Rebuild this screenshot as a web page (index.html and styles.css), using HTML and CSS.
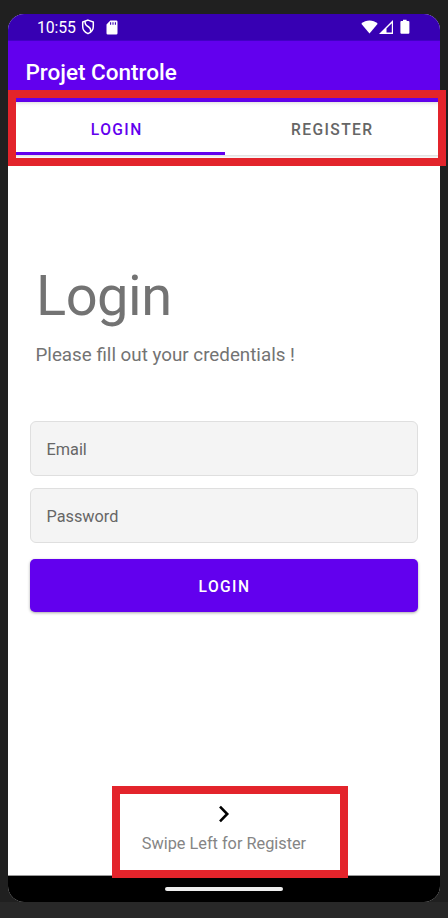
FILE: index.html
```
<!DOCTYPE html>
<html lang="en">
<head>
<meta charset="utf-8">
<title>Projet Controle</title>
<link rel="stylesheet" href="styles.css">
</head>
<body>
<div class="phone">
  <div class="status">
    <span class="clock">10:55</span>
    <svg class="shield" width="14" height="16" viewBox="0 0 14 16" fill="none" stroke="#fff" stroke-width="1.5"><path d="M7 1.1 12.3 3v4.6c0 3.2-2.2 5.8-5.3 7-3.1-1.2-5.3-3.8-5.3-7V3z"/><path d="M4.2 2.3c-.5 2.5.4 3.8 2.8 5.2 2.4 1.4 3.2 2.6 2.5 5.2"/></svg>
    <svg class="card" width="12" height="15" viewBox="0 0 12 15"><path fill="#fff" d="M4.3.5H10.2a1.3 1.3 0 0 1 1.3 1.3V13.2a1.3 1.3 0 0 1-1.3 1.3H1.8A1.3 1.3 0 0 1 .5 13.2V4.5z"/><path stroke="#3700b3" stroke-width="1.1" d="M4.6 2.2v2.6M7 2.2v2.6M9.4 2.2v2.6"/></svg>
    <svg class="signals" width="50" height="16" viewBox="0 0 50 16"><path fill="#fff" d="M.3 4.7C5 .3 12 .3 16.7 4.7L8.500 14.500z"/><path fill="#fff" d="M18 15 32 1v14z"/><path fill="#3700b3" d="M25.500 9.500 30.800 4.200v9.400h-5.300z"/><path fill="#fff" d="M42 .8h3.600v1.300h1.800a1 1 0 0 1 1 1v10.700a1 1 0 0 1-1 1h-7a1 1 0 0 1-1-1V3.100a1 1 0 0 1 1-1H42z"/></svg>
  </div>
  <header class="appbar"><h1>Projet Controle</h1></header>
  <nav class="tabs">
    <div class="tab active"><span>LOGIN</span></div>
    <div class="tab"><span>REGISTER</span></div>
  </nav>
  <main class="page">
    <h2><span>Login</span></h2>
    <p class="lead"><span>Please fill out your credentials !</span></p>
    <div class="field"><span>Email</span></div>
    <div class="field"><span>Password</span></div>
    <button class="submit">LOGIN</button>
    <div class="hint">
      <svg width="12" height="18" viewBox="0 0 12 18" fill="none" stroke="#000" stroke-width="2.6"><path d="M2 1.7 9.2 9 2 16.3"/></svg>
      <span>Swipe Left for Register</span>
    </div>
  </main>
  <footer class="navbar"><i></i></footer>
</div>
<div class="mark mark-tabs"></div>
<div class="mark mark-hint"></div>
</body>
</html>
```
FILE: styles.css
```
* { box-sizing: border-box; }
body {
  margin: 0;
  width: 448px;
  height: 918px;
  padding: 14px 8px 0;
  overflow: hidden;
  position: relative;
  background: linear-gradient(#202020 902px, #282828 902px);
  font-family: Roboto, sans-serif;
}
h1, h2, p { margin: 0; font-weight: 400; }
.phone {
  width: 432px;
  height: 888px;
  display: flex;
  flex-direction: column;
  overflow: hidden;
  border-radius: 16px;
  background: #fff;
}
.status {
  height: 27px;
  flex: none;
  display: flex;
  align-items: center;
  padding: 0 29px;
  background: #3700b3;
  border-bottom: 1px solid #4300c6;
  color: #fff;
}
.clock { width: 44px; padding-top: 1px; font-size: 15.8px; letter-spacing: -.1px; line-height: 26px; white-space: nowrap; }
.shield { margin-right: 11px; }
.card { margin-top: 1px; }
.signals { margin-left: auto; }
.appbar {
  height: 61px;
  flex: none;
  padding: 18px 17px 0;
  background: #6200ee;
  color: #fff;
}
.appbar h1 { padding-left: .5px; font-size: 22.5px; line-height: 26px; font-weight: 500; }
.tabs {
  height: 53px;
  flex: none;
  display: flex;
  background: linear-gradient(#e4e4e4, #fafafa 3px, #fff 6px);
  box-shadow: 0 1px 3px rgba(0, 0, 0, .18);
}
.tab {
  flex: 1;
  display: flex;
  align-items: center;
  justify-content: center;
  padding-top: 2px;
  font-size: 15.6px;
  font-weight: 500;
  letter-spacing: 1.4px;
  color: #666;
}
.tab.active { padding: 5px 0 0 1px; color: #6200ee; border-bottom: 3px solid #6200ee; }
.page {
  flex: 1;
  display: flex;
  flex-direction: column;
  padding: 105px 22px 0;
  color: #737373;
}
.page h2 { height: 70px; padding-left: 6px; font-size: 56px; line-height: 72px; letter-spacing: -.5px; }
.lead { height: 30px; margin-top: 10px; padding-left: 5.5px; font-size: 18.8px; line-height: 30px; }
.field {
  height: 55px;
  margin-bottom: 12px;
  padding-left: 15.5px;
  border: 1px solid #dfdfdf;
  border-radius: 6px;
  background: #f4f4f4;
  color: #666;
  font-size: 16.3px;
  line-height: 55px;
}
.lead + .field { margin-top: 51px; }
.submit {
  height: 53px;
  margin-top: 4px;
  padding: 2px 0 0 1px;
  border: 0;
  border-radius: 5px;
  background: #6200ee;
  box-shadow: 0 1px 3px rgba(0, 0, 0, .35);
  color: #fff;
  font: 500 15.6px Roboto, sans-serif;
  letter-spacing: 1.4px;
}
.hint {
  margin-top: 193px;
  display: flex;
  flex-direction: column;
  align-items: center;
  gap: 11px;
  font-size: 16.3px;
  line-height: 20px;
  color: #858585;
}
.navbar {
  height: 27px;
  flex: none;
  display: flex;
  justify-content: center;
  border-top: 1px solid #999;
  background: #000;
}
.navbar i { width: 118px; height: 4px; margin-top: 11px; border-radius: 2px; background: #eee; }
.mark { position: absolute; border: 8px solid #e3242b; }
.mark-tabs { left: 8px; top: 90px; width: 438px; height: 76px; }
.mark-hint { left: 112px; top: 786px; width: 236px; height: 92px; }
```
